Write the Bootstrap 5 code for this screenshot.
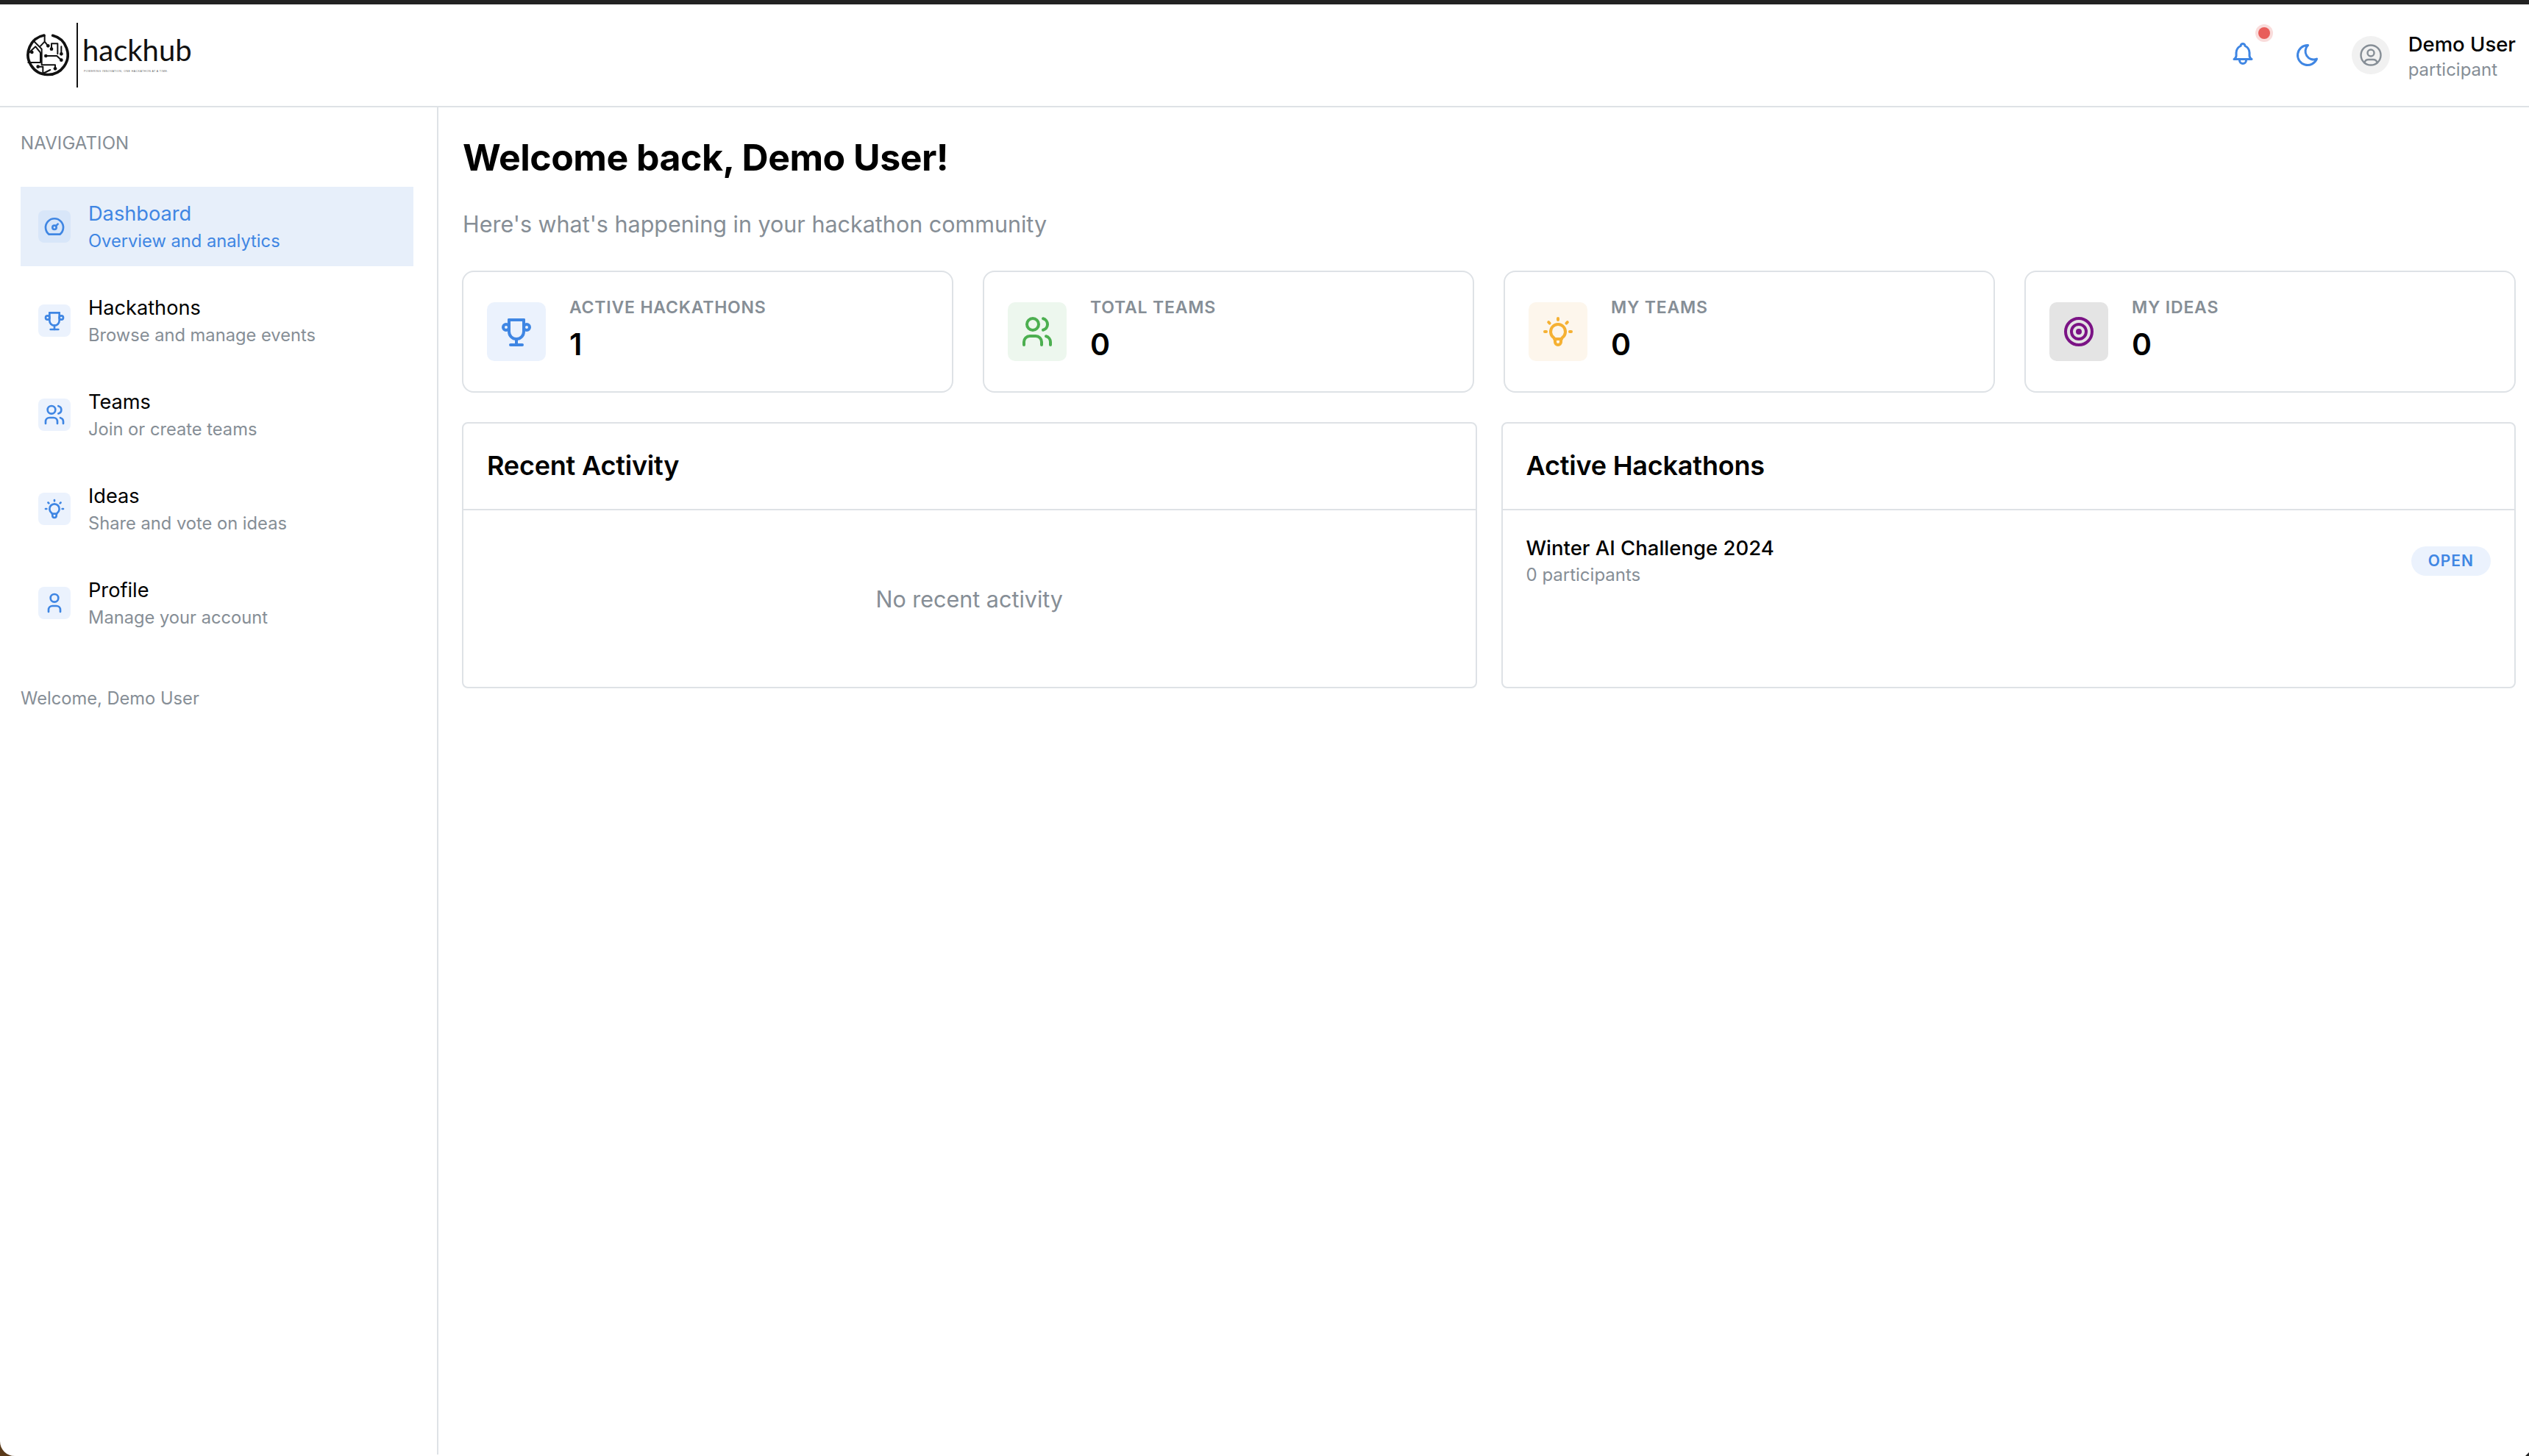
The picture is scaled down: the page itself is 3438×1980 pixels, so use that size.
<!DOCTYPE html>
<html lang="en">
<head>
  <meta charset="UTF-8">
  <title>HackHub - Dashboard</title>
  <meta name="viewport" content="width=device-width, initial-scale=1.0">
  <link href="https://cdn.jsdelivr.net/npm/bootstrap@5.3.2/dist/css/bootstrap.min.css" rel="stylesheet">
  <style>
    html, body {
      height: 100%;
    }
    body {
      font-family: "Inter", "Liberation Sans", sans-serif;
      color: #000;
      background: #fff;
      border-top: 6px solid #222;
      overflow: hidden;
    }
    .ic {
      fill: none;
      stroke: currentColor;
      stroke-width: 2;
      stroke-linecap: round;
      stroke-linejoin: round;
      flex: none;
    }
    .app-header {
      height: 140px;
      border-bottom: 2px solid #dee2e6;
      padding: 0 18px 0 34px;
    }
    .logo-mark { width: 60px; height: 60px; }
    .logo-rule { width: 2px; height: 88px; background: #111; margin: 0 6px 0 10px; }
    .logo-word {
      font-family: "Lato", sans-serif;
      font-size: 40px;
      line-height: 34px;
      color: #111;
    }
    .logo-tag {
      font-family: "Liberation Sans", sans-serif;
      font-size: 3.6px;
      line-height: 6px;
      letter-spacing: .45px;
      color: #666;
      margin-top: 9px;
      margin-left: 2px;
      white-space: nowrap;
    }
    .top-icon { color: #3f86e3; }
    .bell-wrap { margin-right: 52px; margin-top: -4px; }
    .bell-dot {
      top: -18px;
      right: -19px;
      width: 16px;
      height: 16px;
      border-radius: 50%;
      background: #e85d5a;
      box-shadow: 0 0 0 4px #f9dcdb;
    }
    .moon-wrap { margin-right: 42px; }
    .avatar-disc {
      width: 52px;
      height: 52px;
      background: #f1f1f1;
      color: #868e96;
      margin-right: 25px;
    }
    .user-block { padding-top: 4px; }
    .user-name { font-size: 27.5px; line-height: 36px; font-weight: 450; }
    .user-role { font-size: 24px; line-height: 34px; color: #868e96; }
    .side-col {
      width: 596px;
      flex: none;
      border-right: 2px solid #dee2e6;
      padding: 30px 32px 0 28px;
    }
    .nav-head { font-size: 24px; line-height: 38px; letter-spacing: .1px; color: #868e96; margin-bottom: 40px; }
    .nav-entry {
      height: 108px;
      margin-bottom: 20px;
      padding-left: 24px;
      gap: 24px;
      color: #000;
      text-decoration: none;
    }
    .nav-entry.current { background: #e7effa; color: #3f86e3; }
    .nav-entry.current .nav-sub { color: #3f86e3; }
    .nav-entry.current .nav-glyph { background: #d8e6f9; }
    .nav-glyph {
      width: 44px;
      height: 44px;
      border-radius: 8px;
      background: #ebf2fd;
      color: #3f86e3;
      flex: none;
    }
    .nav-copy { padding-top: 2px; }
    .nav-title { font-size: 27.2px; line-height: 38px; }
    .nav-sub { font-size: 23.7px; line-height: 36px; color: #868e96; }
    .side-foot { font-size: 23.7px; line-height: 36px; color: #868e96; margin-top: 58px; }
    .main-col { padding: 0 18px 0 32px; min-width: 0; }
    .page-title { font-size: 50px; line-height: 64px; font-weight: 700; letter-spacing: -.5px; margin: 36px 0 0 1px; }
    .page-sub { font-size: 30.5px; line-height: 44px; color: #868e96; margin: 37px 0 0 1px; }
    .stat-row { display: grid; grid-template-columns: repeat(4, 1fr); gap: 40px; margin-top: 41px; }
    .stat-box {
      height: 166px;
      border: 2px solid #dee2e6;
      border-radius: 16px;
      padding: 0 32px;
      gap: 32px;
    }
    .stat-glyph { width: 80px; height: 80px; border-radius: 10px; flex: none; }
    .tint-blue { background: #ebf2fd; color: #3f86e3; }
    .tint-green { background: #edf7ee; color: #4caf50; }
    .tint-amber { background: #fdf6ec; color: #f5b133; }
    .tint-violet { background: #e4e4e4; color: #7b1385; }
    .stat-text { padding-top: 32px; }
    .stat-label { font-size: 23px; line-height: 32px; font-weight: 600; letter-spacing: .8px; color: #868e96; margin-bottom: 6px; }
    .stat-value { font-size: 41px; line-height: 56px; font-weight: 600; }
    .panel-row { display: grid; grid-template-columns: repeat(2, 1fr); gap: 33px; margin-top: 40px; }
    .panel-box { height: 362px; border: 2px solid #dee2e6; border-radius: 8px; }
    .panel-head { height: 118px; padding: 0 32px; border-bottom: 2px solid #dee2e6; }
    .panel-title { font-size: 36px; font-weight: 600; margin: 0; letter-spacing: -.2px; }
    .panel-empty { font-size: 30.5px; color: #868e96; padding-top: 2px; }
    .hack-row { padding: 32px 32px 0; }
    .hack-name { font-size: 27.5px; line-height: 38px; font-weight: 450; }
    .hack-meta { font-size: 24px; line-height: 36px; color: #868e96; }
    .status-chip {
      height: 40px;
      padding: 0 23px;
      border-radius: 20px;
      background: #ebf2fd;
      color: #3f86e3;
      font-size: 21px;
      font-weight: 600;
      letter-spacing: 1px;
    }
    .corner-wedge { left: 0; bottom: 0; width: 20px; height: 20px; }
    .corner-tip { right: 0; bottom: 0; width: 5px; height: 5px; }
  </style>
</head>
<body>

<svg width="0" height="0" class="position-absolute">
  <defs>
    <symbol id="i-dashboard" viewBox="0 0 24 24"><path d="M12 13m-2 0a2 2 0 1 0 4 0a2 2 0 1 0 -4 0"/><path d="M13.45 11.55l2.05 -2.05"/><path d="M6.4 20a9 9 0 1 1 11.2 0z"/></symbol>
    <symbol id="i-trophy" viewBox="0 0 24 24"><path d="M8 21l8 0"/><path d="M12 17l0 4"/><path d="M7 4l10 0"/><path d="M17 4v8a5 5 0 0 1 -10 0v-8"/><path d="M5 9m-2 0a2 2 0 1 0 4 0a2 2 0 1 0 -4 0"/><path d="M19 9m-2 0a2 2 0 1 0 4 0a2 2 0 1 0 -4 0"/></symbol>
    <symbol id="i-users" viewBox="0 0 24 24"><path d="M9 7m-4 0a4 4 0 1 0 8 0a4 4 0 1 0 -8 0"/><path d="M3 21v-2a4 4 0 0 1 4 -4h4a4 4 0 0 1 4 4v2"/><path d="M16 3.13a4 4 0 0 1 0 7.75"/><path d="M21 21v-2a4 4 0 0 0 -3 -3.85"/></symbol>
    <symbol id="i-bulb" viewBox="0 0 24 24"><path d="M3 12h1m8 -9v1m8 8h1m-15.4 -6.4l.7 .7m12.1 -.7l-.7 .7"/><path d="M9 16a5 5 0 1 1 6 0a3.5 3.5 0 0 0 -1 3a2 2 0 0 1 -4 0a3.5 3.5 0 0 0 -1 -3"/><path d="M9.7 17l4.6 0"/></symbol>
    <symbol id="i-user" viewBox="0 0 24 24"><path d="M8 7a4 4 0 1 0 8 0a4 4 0 0 0 -8 0"/><path d="M6 21v-2a4 4 0 0 1 4 -4h4a4 4 0 0 1 4 4v2"/></symbol>
    <symbol id="i-target" viewBox="0 0 24 24"><path d="M12 12m-1 0a1 1 0 1 0 2 0a1 1 0 1 0 -2 0"/><path d="M12 12m-5 0a5 5 0 1 0 10 0a5 5 0 1 0 -10 0"/><path d="M12 12m-9 0a9 9 0 1 0 18 0a9 9 0 1 0 -18 0"/></symbol>
    <symbol id="i-bell" viewBox="0 0 24 24"><path d="M10 5a2 2 0 1 1 4 0a7 7 0 0 1 4 6v3a4 4 0 0 0 2 3h-16a4 4 0 0 0 2 -3v-3a7 7 0 0 1 4 -6"/><path d="M9 17v1a3 3 0 0 0 6 0v-1"/></symbol>
    <symbol id="i-moon" viewBox="0 0 24 24"><path d="M12 3c.132 0 .263 0 .393 0a7.5 7.5 0 0 0 7.92 12.446a9 9 0 1 1 -8.313 -12.454z"/></symbol>
    <symbol id="i-account" viewBox="0 0 24 24"><path d="M12 12m-9 0a9 9 0 1 0 18 0a9 9 0 1 0 -18 0"/><path d="M12 10m-3 0a3 3 0 1 0 6 0a3 3 0 1 0 -6 0"/><path d="M6.168 18.849a4 4 0 0 1 3.832 -2.849h4a4 4 0 0 1 3.834 2.855"/></symbol>
  </defs>
</svg>

<!-- Header -->
<header class="app-header d-flex align-items-center">
  <div class="d-flex align-items-center">
    <svg class="logo-mark" viewBox="102 135 180 180" fill="none" stroke="#111" stroke-width="6" stroke-linecap="round" stroke-linejoin="round">
      <path d="M215 145A81 81 0 1 1 180 144" stroke-width="11"/>
      <path d="M182 146v24l-17 18M182 170l14 17"/>
      <path d="M135 165l35 35v65h55v15"/>
      <path d="M118 215l27-25 20 25v40h-50"/>
      <path d="M210 200v-22h25v42M250 190v30"/>
      <path d="M187 228h45l18 17"/>
      <path d="M155 272h20v28l30-15"/>
      <g fill="#111" stroke="none">
        <circle cx="196" cy="187" r="7"/><circle cx="225" cy="280" r="7"/><circle cx="130" cy="213" r="7"/>
        <circle cx="210" cy="200" r="7"/><circle cx="250" cy="220" r="7"/><circle cx="187" cy="228" r="7"/>
        <circle cx="250" cy="245" r="7"/><circle cx="155" cy="272" r="7"/>
      </g>
    </svg>
    <div class="logo-rule"></div>
    <div>
      <div class="logo-word">hackhub</div>
      <div class="logo-tag">POWERING INNOVATION, ONE HACKATHON AT A TIME.</div>
    </div>
  </div>
  <div class="ms-auto d-flex align-items-center">
    <div class="bell-wrap position-relative d-flex top-icon">
      <svg class="ic" width="36" height="36"><use href="#i-bell"/></svg>
      <span class="bell-dot position-absolute"></span>
    </div>
    <div class="moon-wrap d-flex top-icon">
      <svg class="ic" width="36" height="36"><use href="#i-moon"/></svg>
    </div>
    <div class="avatar-disc rounded-circle d-flex align-items-center justify-content-center">
      <svg class="ic" width="36" height="36" style="stroke-width:1.6"><use href="#i-account"/></svg>
    </div>
    <div class="user-block">
      <div class="user-name">Demo User</div>
      <div class="user-role">participant</div>
    </div>
  </div>
</header>

<div class="d-flex" style="height:calc(100% - 142px)">
  <!-- Sidebar -->
  <aside class="side-col">
    <div class="nav-head">NAVIGATION</div>
    <nav>
      <a href="#" class="nav-entry current d-flex align-items-center">
        <span class="nav-glyph d-flex align-items-center justify-content-center"><svg class="ic" width="32" height="32"><use href="#i-dashboard"/></svg></span>
        <span class="nav-copy"><div class="nav-title">Dashboard</div><div class="nav-sub">Overview and analytics</div></span>
      </a>
      <a href="#" class="nav-entry d-flex align-items-center">
        <span class="nav-glyph d-flex align-items-center justify-content-center"><svg class="ic" width="32" height="32"><use href="#i-trophy"/></svg></span>
        <span class="nav-copy"><div class="nav-title">Hackathons</div><div class="nav-sub">Browse and manage events</div></span>
      </a>
      <a href="#" class="nav-entry d-flex align-items-center">
        <span class="nav-glyph d-flex align-items-center justify-content-center"><svg class="ic" width="32" height="32"><use href="#i-users"/></svg></span>
        <span class="nav-copy"><div class="nav-title">Teams</div><div class="nav-sub">Join or create teams</div></span>
      </a>
      <a href="#" class="nav-entry d-flex align-items-center">
        <span class="nav-glyph d-flex align-items-center justify-content-center"><svg class="ic" width="32" height="32"><use href="#i-bulb"/></svg></span>
        <span class="nav-copy"><div class="nav-title">Ideas</div><div class="nav-sub">Share and vote on ideas</div></span>
      </a>
      <a href="#" class="nav-entry d-flex align-items-center">
        <span class="nav-glyph d-flex align-items-center justify-content-center"><svg class="ic" width="32" height="32"><use href="#i-user"/></svg></span>
        <span class="nav-copy"><div class="nav-title">Profile</div><div class="nav-sub">Manage your account</div></span>
      </a>
    </nav>
    <div class="side-foot">Welcome, Demo User</div>
  </aside>

  <!-- Main -->
  <main class="main-col flex-grow-1">
    <h1 class="page-title">Welcome back, Demo User!</h1>
    <p class="page-sub">Here's what's happening in your hackathon community</p>

    <div class="stat-row">
      <div class="stat-box d-flex align-items-center">
        <div class="stat-glyph tint-blue d-flex align-items-center justify-content-center"><svg class="ic" width="48" height="48"><use href="#i-trophy"/></svg></div>
        <div class="align-self-start stat-text"><div class="stat-label">ACTIVE HACKATHONS</div><div class="stat-value">1</div></div>
      </div>
      <div class="stat-box d-flex align-items-center">
        <div class="stat-glyph tint-green d-flex align-items-center justify-content-center"><svg class="ic" width="48" height="48"><use href="#i-users"/></svg></div>
        <div class="align-self-start stat-text"><div class="stat-label">TOTAL TEAMS</div><div class="stat-value">0</div></div>
      </div>
      <div class="stat-box d-flex align-items-center">
        <div class="stat-glyph tint-amber d-flex align-items-center justify-content-center"><svg class="ic" width="48" height="48"><use href="#i-bulb"/></svg></div>
        <div class="align-self-start stat-text"><div class="stat-label">MY TEAMS</div><div class="stat-value">0</div></div>
      </div>
      <div class="stat-box d-flex align-items-center">
        <div class="stat-glyph tint-violet d-flex align-items-center justify-content-center"><svg class="ic" width="48" height="48"><use href="#i-target"/></svg></div>
        <div class="align-self-start stat-text"><div class="stat-label">MY IDEAS</div><div class="stat-value">0</div></div>
      </div>
    </div>

    <div class="panel-row">
      <section class="panel-box d-flex flex-column">
        <div class="panel-head d-flex align-items-center"><h2 class="panel-title">Recent Activity</h2></div>
        <div class="panel-empty flex-grow-1 d-flex align-items-center justify-content-center">No recent activity</div>
      </section>
      <section class="panel-box d-flex flex-column">
        <div class="panel-head d-flex align-items-center"><h2 class="panel-title">Active Hackathons</h2></div>
        <div class="hack-row d-flex justify-content-between align-items-center">
          <div><div class="hack-name">Winter AI Challenge 2024</div><div class="hack-meta">0 participants</div></div>
          <span class="status-chip d-flex align-items-center">OPEN</span>
        </div>
      </section>
    </div>
  </main>
</div>

<!-- window corners left in the capture -->
<svg class="corner-wedge position-fixed" viewBox="0 0 20 20"><path d="M0 0a20 20 0 0 0 20 20H0z" fill="#5a3a1a"/></svg>
<svg class="corner-tip position-fixed" viewBox="0 0 5 5"><path d="M5 0v5H0z" fill="#222"/></svg>

<script src="https://cdn.jsdelivr.net/npm/bootstrap@5.3.2/dist/js/bootstrap.bundle.min.js"></script>
</body>
</html>
